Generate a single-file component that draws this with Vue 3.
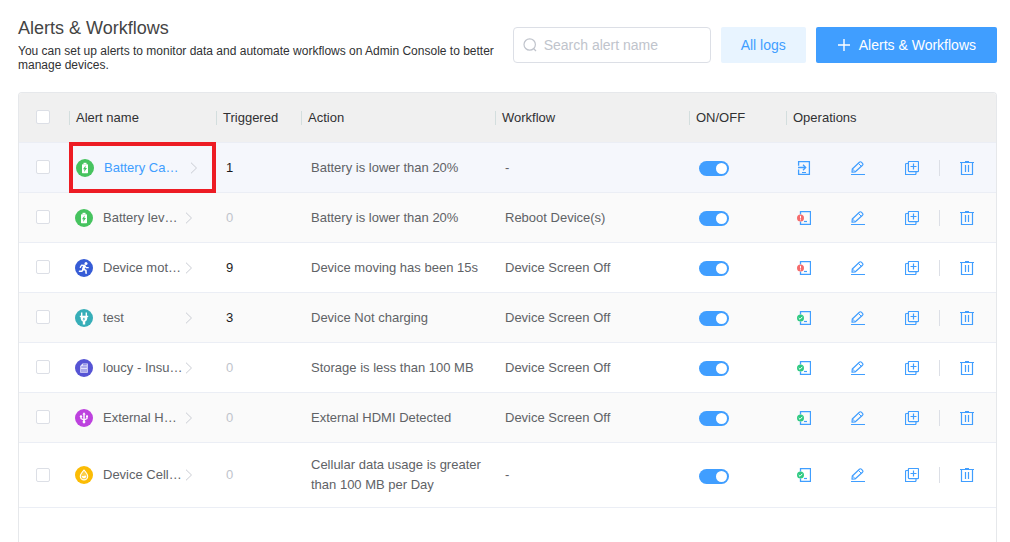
<script setup>
import { ref } from 'vue'

const search = ref('')
const columns = ['Alert name', 'Triggered', 'Action', 'Workflow', 'ON/OFF', 'Operations']
const alerts = ref([
  { id: 1, icon: 'battery', name: 'Battery Ca…', triggered: 1, action: 'Battery is lower than 20%', workflow: '-', on: true, log: 'none', active: true },
  { id: 2, icon: 'battery', name: 'Battery lev…', triggered: 0, action: 'Battery is lower than 20%', workflow: 'Reboot Device(s)', on: true, log: 'error' },
  { id: 3, icon: 'motion', name: 'Device mot…', triggered: 9, action: 'Device moving has been 15s', workflow: 'Device Screen Off', on: true, log: 'error' },
  { id: 4, icon: 'plug', name: 'test', triggered: 3, action: 'Device Not charging', workflow: 'Device Screen Off', on: true, log: 'ok' },
  { id: 5, icon: 'storage', name: 'loucy - Insu…', triggered: 0, action: 'Storage is less than 100 MB', workflow: 'Device Screen Off', on: true, log: 'ok' },
  { id: 6, icon: 'usb', name: 'External H…', triggered: 0, action: 'External HDMI Detected', workflow: 'Device Screen Off', on: true, log: 'ok' },
  { id: 7, icon: 'data', name: 'Device Cell…', triggered: 0, action: 'Cellular data usage is greater than 100 MB per Day', workflow: '-', on: true, log: 'ok' },
])
</script>

<template>
  <main class="page">
    <header class="top">
      <div class="intro">
        <h1>Alerts &amp; Workflows</h1>
        <p>You can set up alerts to monitor data and automate workflows on Admin Console to better manage devices.</p>
      </div>
      <label class="search">
        <svg viewBox="0 0 14 14" width="14" height="14" fill="none" stroke="#c0c4cc" stroke-width="1.2">
          <circle cx="6.7" cy="6.500" r="5.700" /><path d="M10.500 10.500 13 13" />
        </svg>
        <input v-model="search" type="text" placeholder="Search alert name" aria-label="Search alert name" />
      </label>
      <button type="button" class="btn light">All logs</button>
      <button type="button" class="btn primary">
        <svg viewBox="0 0 12 12" width="12" height="12" stroke="#fff" stroke-width="1.4"><path d="M6 0v12M0 6h12" /></svg>
        Alerts &amp; Workflows
      </button>
    </header>

    <section class="card">
      <table>
        <colgroup>
          <col class="c-check" /><col class="c-name" /><col class="c-count" /><col /><col /><col class="c-switch" /><col class="c-ops" />
        </colgroup>
        <thead>
          <tr>
            <th class="check"><input type="checkbox" aria-label="Select all alerts" /></th>
            <th v-for="c in columns" :key="c" scope="col"><span>{{ c }}</span></th>
          </tr>
        </thead>
        <tbody>
          <tr v-for="a in alerts" :key="a.id" :class="{ active: a.active }">
            <td class="check"><input type="checkbox" :aria-label="'Select ' + a.name" /></td>
            <td class="name-cell">
              <a href="#" class="name">
                <svg class="kind" viewBox="0 0 18 18" width="18" height="18" aria-hidden="true">
                  <g v-if="a.icon === 'battery'">
                    <circle cx="9" cy="9" r="9" fill="#46c35f" />
                    <rect x="7.5" y="3.8" width="3" height="1.4" fill="#fff" />
                    <rect x="6" y="5.2" width="6" height="9" rx="0.6" fill="#fff" />
                    <path d="M9.6 6.500 7 10.200h1.500l-.4 2.800L11 8.900H9.400z" fill="#46c35f" />
                  </g>
                  <g v-else-if="a.icon === 'motion'">
                    <circle cx="9" cy="9" r="9" fill="#365cd6" />
                    <circle cx="11" cy="4.500" r="1.500" fill="#fff" />
                    <g fill="none" stroke="#fff" stroke-linecap="round" stroke-linejoin="round">
                      <path d="M5.300 8.400 6.500 6.200 9.300 6.300" stroke-width="1.300" />
                      <path d="M9.300 7 8.300 10" stroke-width="2.500" />
                      <path d="M10 7 11.200 8.700h2" stroke-width="1.300" />
                      <path d="m8.700 10.200 2.200 1.200.2 2.800M8.100 10.300 7 12.200H4.500" stroke-width="1.600" />
                    </g>
                  </g>
                  <g v-else-if="a.icon === 'plug'">
                    <circle cx="9" cy="9" r="9" fill="#37aeb8" />
                    <path d="M6.700 3.500v4M11.300 3.500v4" stroke="#fff" stroke-width="1.400" />
                    <path d="M4.800 6.800h8.400v1.100h-.8c0 2.400-.8 3.800-2.200 4.600v3H7.800v-3C6.400 11.700 5.600 10.300 5.600 7.900h-.8z" fill="#fff" />
                    <path d="M9.200 7.900 7.600 10.400h1.200l-.3 1.600 1.800-2.600H9z" fill="#37aeb8" />
                  </g>
                  <g v-else-if="a.icon === 'storage'">
                    <circle cx="9" cy="9" r="9" fill="#5654d4" />
                    <path d="M7.500 4.500h5.300v9.300H5.200V7z" fill="#e4e3fa" />
                    <path d="M8 5.800h3.800M6.300 8h5.500" stroke="#5654d4" stroke-width=".8" />
                    <path d="M6 10h6v3H6z" fill="#aaa8ea" />
                  </g>
                  <g v-else-if="a.icon === 'usb'">
                    <circle cx="9" cy="9" r="9" fill="#bd42de" />
                    <g fill="none" stroke="#fff">
                      <path d="M9 5v8" stroke-width="1.400" />
                      <path d="M6 7.500v2.100L9 11l3-1.400V7.500" stroke-width="1.100" />
                    </g>
                    <path d="m9 3.200 1.700 2.300H7.300z" fill="#fff" />
                    <circle cx="6" cy="7.400" r="1.200" fill="#fff" /><rect x="11" y="6.400" width="2" height="2" fill="#fff" />
                    <circle cx="9" cy="13" r="1.400" fill="#fff" />
                  </g>
                  <g v-else>
                    <circle cx="9" cy="9" r="9" fill="#fbbc05" />
                    <path d="M9 4c2.200 2.500 3.700 4.400 3.700 6.200a3.700 3.700 0 0 1-7.400 0C5.300 8.400 6.800 6.500 9 4z" fill="#fbcf4a" stroke="#fff" stroke-width="1.100" />
                    <path d="M6.700 10.600c1-1.200 1.700.2 2.600-.5.900-.8 1.300-.5 2 .1a2.400 2.400 0 0 1-4.600.4z" fill="#fff" />
                  </g>
                </svg>
                <span class="label">{{ a.name }}</span>
                <svg class="chevron" viewBox="0 0 8 12" width="8" height="12" fill="none" stroke="#c9ccd3" aria-hidden="true"><path d="M1 .7 6.500 6 1 11.300" /></svg>
              </a>
              <span v-if="a.active" class="highlight"></span>
            </td>
            <td :class="a.triggered ? 'count' : 'zero'">{{ a.triggered }}</td>
            <td>{{ a.action }}</td>
            <td>{{ a.workflow }}</td>
            <td class="switch-cell"><input v-model="a.on" class="switch" type="checkbox" role="switch" :aria-label="'Enable ' + a.name" /></td>
            <td>
              <div class="ops">
                <button type="button" aria-label="View log">
                  <svg v-if="a.log === 'none'" viewBox="0 0 14 14" width="14" height="14" fill="none" stroke="#409eff">
                    <path d="M1.600 4.700V.6h10.800v12.800H1.600V8.500" stroke-width="1.300" />
                    <path d="M1 6.500h7M6 3.800 8.700 6.500 6 9.200" stroke-width="1.300" />
                    <path d="M5 11.500h4" />
                  </svg>
                  <svg v-else viewBox="0 0 14 14" width="14" height="14" fill="none" stroke="#409eff">
                    <path d="M3.500 3.500v-3h10v13h-10v-3" stroke-width="1.300" />
                    <path d="M7 10.500h3" stroke-width="1.200" />
                    <circle cx="3.500" cy="7" r="3.500" stroke="none" :fill="a.log === 'ok' ? '#2fca82' : '#f56c6c'" />
                    <path v-if="a.log === 'ok'" d="m1.700 7 1.300 1.300 2.300-2.500" stroke="#fff" />
                    <path v-else d="M3.500 4.800v2.700M3.500 8.300v1" stroke="#fff" />
                  </svg>
                </button>
                <button type="button" aria-label="Edit">
                  <svg viewBox="0 0 14 14" width="14" height="14" fill="none" stroke="#409eff">
                    <path d="M0 13.500h14" />
                    <path d="M1 11.100 1.300 8 8.400 1.200c.6-.6 1.300-.6 1.900 0l1.200 1.200c.6.600.6 1.200 0 1.800L4.300 10.800z" stroke-linejoin="round" stroke-width="1.200" />
                    <path d="m7.300 2.300 3 3M1.500 8l2.600 2.700" />
                  </svg>
                </button>
                <button type="button" aria-label="Duplicate">
                  <svg viewBox="0 0 14 14" width="14" height="14" fill="none" stroke="#409eff" stroke-width="1.200">
                    <rect x="3.400" y=".5" width="10.100" height="10.100" rx=".8" />
                    <path d="M3.500 2.500h-2a1 1 0 0 0-1 1v10H10a1 1 0 0 0 1-1v-2M8.500 2.500v6M5.500 5.500h6" />
                  </svg>
                </button>
                <i class="sep"></i>
                <button type="button" aria-label="Delete">
                  <svg viewBox="0 0 14 14" width="14" height="14" fill="none" stroke="#409eff" stroke-width="1.200">
                    <path d="M0 1.500h14M5 .5h4M1.500 1.500v12h11v-12M5.500 4v7M8.500 4v7" />
                  </svg>
                </button>
              </div>
            </td>
          </tr>
        </tbody>
      </table>
    </section>
  </main>
</template>

<style>
body {
  background: #fff;
}
</style>

<style scoped>
* {
  box-sizing: border-box;
}
.page {
  display: flex;
  flex-direction: column;
  min-height: 100vh;
  padding: 17px 13px 0 18px;
  font-family: "Liberation Sans", Arial, sans-serif;
  font-size: 13px;
  color: #606266;
}
.top {
  display: flex;
  gap: 10px;
  align-items: flex-start;
  margin-bottom: 20px;
}
.intro {
  flex: 1;
  min-width: 0;
}
h1 {
  margin: 0 0 5px;
  font-size: 18px;
  line-height: 22px;
  font-weight: 400;
  color: #444;
}
p {
  margin: 0;
  font-size: 12px;
  line-height: 14px;
  color: #303133;
}
.search {
  display: flex;
  align-items: center;
  gap: 7px;
  width: 198px;
  height: 36px;
  margin-top: 10px;
  padding: 0 9px;
  border: 1px solid #dcdfe6;
  border-radius: 4px;
}
.search svg {
  flex: none;
}
.search input {
  flex: 1;
  min-width: 0;
  padding: 0;
  border: 0;
  outline: 0;
  background: none;
  font: inherit;
  font-size: 14px;
  color: #606266;
}
.search input::placeholder {
  color: #c0c4cc;
}
button {
  padding: 0;
  border: 0;
  background: none;
  font: inherit;
  cursor: pointer;
}
.btn {
  display: flex;
  align-items: center;
  gap: 9px;
  height: 36px;
  margin-top: 10px;
  border-radius: 2px;
  font-size: 14px;
  white-space: nowrap;
}
.light {
  padding: 0 20px;
  background: #e8f4ff;
  color: #409eff;
}
.primary {
  padding: 0 21px 0 22px;
  background: #409eff;
  color: #fff;
}
.card {
  flex: 1;
  border: 1px solid #e6e8eb;
  border-bottom: 0;
  border-radius: 4px 4px 0 0;
}
table {
  width: 100%;
  table-layout: fixed;
  border-spacing: 0;
}
.c-check {
  width: 50px;
}
.c-name {
  width: 147px;
}
.c-count {
  width: 85px;
}
.c-switch {
  width: 97px;
}
.c-ops {
  width: 210px;
}
th {
  height: 50px;
  padding: 0;
  background: #f0f0f0;
  border-bottom: 1px solid #ebeef5;
  font-weight: 400;
  text-align: left;
  color: #303133;
}
th:first-child {
  border-top-left-radius: 3px;
}
th:last-child {
  border-top-right-radius: 3px;
}
th span {
  display: block;
  padding-left: 6px;
  border-left: 1px solid #d3dede;
  line-height: 14px;
}
td {
  height: 50px;
  padding: 7px 10px;
  border-bottom: 1px solid #ebeef5;
  line-height: 20px;
}
tbody tr:nth-child(even) td {
  background: #fafafa;
}
tbody tr.active td {
  background: #f5f7fc;
}
tbody tr:last-child td {
  height: 65px;
}
th.check,
td.check {
  padding: 0 0 1px 17px;
}
.check input {
  display: block;
  appearance: none;
  width: 14px;
  height: 14px;
  margin: 0;
  border: 1px solid #dcdfe6;
  border-radius: 2px;
  background: #fff;
}
td.name-cell {
  position: relative;
  padding: 0 0 0 6px;
}
td.switch-cell {
  padding: 2px 0 0 10px;
}
.name {
  display: flex;
  align-items: center;
  color: #606266;
  text-decoration: none;
}
.kind {
  flex: none;
  margin-right: 10px;
}
.label {
  width: 82px;
  white-space: nowrap;
}
.active td.name-cell {
  padding-left: 7px;
}
.active .name {
  color: #409eff;
}
.active .label {
  width: 86px;
}
.highlight {
  position: absolute;
  inset: -1px 0;
  border: 4px solid #ed1c24;
  pointer-events: none;
}
.count {
  color: #1b1b1d;
}
.zero {
  color: #c0c4cc;
}
.switch {
  display: flex;
  align-items: center;
  justify-content: flex-end;
  appearance: none;
  width: 30px;
  height: 15px;
  margin: 0;
  padding: 2px;
  border-radius: 8px;
  background: #dcdfe6;
}
.switch:checked {
  background: #409eff;
}
.switch::before {
  content: "";
  width: 11px;
  height: 11px;
  border-radius: 50%;
  background: #fff;
}
.ops {
  display: flex;
  align-items: center;
  gap: 20px;
  padding-left: 1px;
}
.ops button {
  display: block;
  width: 14px;
  height: 14px;
}
.ops button svg {
  display: block;
}
.ops button + button {
  margin-left: 20px;
}
.sep {
  width: 1px;
  height: 16px;
  background: #dcdfe6;
}
</style>
